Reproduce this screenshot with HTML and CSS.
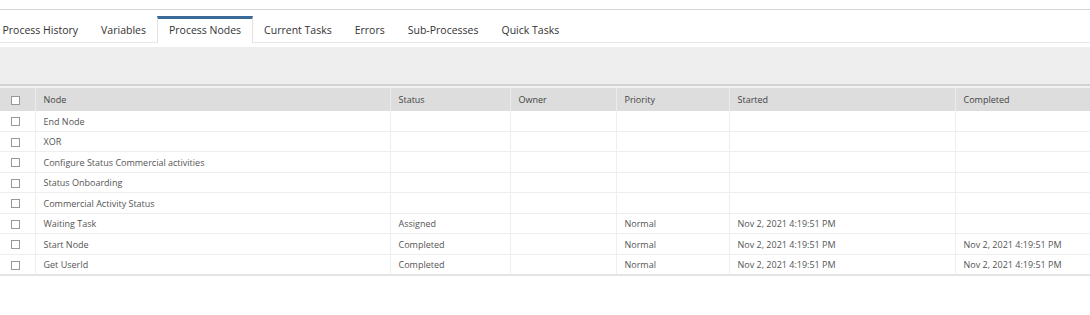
FILE: index.html
```html
<!DOCTYPE html>
<html lang="en">
<head>
    <meta charset="UTF-8">
    <title>Process Nodes</title>
    <link rel="stylesheet" href="styles.css">
</head>
<body>
    <div class="topbar"></div>

    <div class="tabs">
        <div class="tab">Process History</div>
        <div class="tab">Variables</div>
        <div class="tab active">Process Nodes</div>
        <div class="tab">Current Tasks</div>
        <div class="tab">Errors</div>
        <div class="tab">Sub-Processes</div>
        <div class="tab">Quick Tasks</div>
    </div>

    <div class="toolbar"></div>

    <table class="grid">
        <colgroup>
            <col class="c-check">
            <col class="c-node">
            <col class="c-status">
            <col class="c-owner">
            <col class="c-priority">
            <col class="c-started">
            <col>
        </colgroup>
        <thead>
            <tr>
                <th class="check"><span class="box"></span></th>
                <th>Node</th>
                <th>Status</th>
                <th>Owner</th>
                <th>Priority</th>
                <th>Started</th>
                <th>Completed</th>
            </tr>
        </thead>
        <tbody>
            <tr>
                <td class="check"><span class="box"></span></td>
                <td>End Node</td><td></td><td></td><td></td><td></td><td></td>
            </tr>
            <tr>
                <td class="check"><span class="box"></span></td>
                <td>XOR</td><td></td><td></td><td></td><td></td><td></td>
            </tr>
            <tr>
                <td class="check"><span class="box"></span></td>
                <td>Configure Status Commercial activities</td><td></td><td></td><td></td><td></td><td></td>
            </tr>
            <tr>
                <td class="check"><span class="box"></span></td>
                <td>Status Onboarding</td><td></td><td></td><td></td><td></td><td></td>
            </tr>
            <tr>
                <td class="check"><span class="box"></span></td>
                <td>Commercial Activity Status</td><td></td><td></td><td></td><td></td><td></td>
            </tr>
            <tr>
                <td class="check"><span class="box"></span></td>
                <td>Waiting Task</td>
                <td>Assigned</td>
                <td></td>
                <td>Normal</td>
                <td>Nov 2, 2021 4:19:51 PM</td>
                <td></td>
            </tr>
            <tr>
                <td class="check"><span class="box"></span></td>
                <td>Start Node</td>
                <td>Completed</td>
                <td></td>
                <td>Normal</td>
                <td>Nov 2, 2021 4:19:51 PM</td>
                <td>Nov 2, 2021 4:19:51 PM</td>
            </tr>
            <tr>
                <td class="check"><span class="box"></span></td>
                <td>Get UserId</td>
                <td>Completed</td>
                <td></td>
                <td>Normal</td>
                <td>Nov 2, 2021 4:19:51 PM</td>
                <td>Nov 2, 2021 4:19:51 PM</td>
            </tr>
        </tbody>
    </table>
</body>
</html>
```

FILE: styles.css
```css
body {
    margin: 0;
    font-family: 'Open Sans', 'Liberation Sans', sans-serif;
    background-color: #ffffff;
    color: #333333;
    overflow: hidden;
}
.topbar {
    height: 9px;
    border-bottom: 1px solid #d6d6d6;
}
.tabs {
    display: flex;
    margin-top: 6px;
    margin-left: -9px;
    height: 26px;
    border-bottom: 1px solid #e8e8e8;
}
.tab {
    padding: 2px 10.5px 0;
    font-size: 10.5px;
    line-height: 24px;
    color: #333333;
    border-left: 1px solid transparent;
    border-right: 1px solid transparent;
}
.tab.active {
    padding-top: 0;
    border-top: 3px solid #3a6a98;
    border-left-color: #e2e2e2;
    border-right-color: #e2e2e2;
    line-height: 23px;
    height: 24px;
    background-color: #ffffff;
}
.toolbar {
    margin-top: 4px;
    height: 37px;
    background-color: #eeeeee;
    border-bottom: 2px solid #d2d2d2;
}
.grid {
    width: 100%;
    border-collapse: collapse;
    table-layout: fixed;
    font-size: 9px;
    color: #555555;
    border-bottom: 2px solid #e4e4e4;
}
.c-check { width: 35px; }
.c-node { width: 355px; }
.c-status { width: 120px; }
.c-owner { width: 106px; }
.c-priority { width: 113px; }
.c-started { width: 226px; }
.grid th {
    background-color: #dddddd;
    font-weight: normal;
    text-align: left;
    color: #444444;
    height: 23px;
    padding: 0 8px;
    border-left: 1px solid #ebebeb;
    border-top: 2px solid #f2f2f2;
}
.grid td {
    height: 18.5px;
    padding: 1px 8px 0;
    border-left: 1px solid #eeeeee;
    border-bottom: 1px solid #eeeeee;
    white-space: nowrap;
}
.grid th:first-child,
.grid td:first-child {
    border-left: none;
}
.grid .check {
    padding: 0 0 0 11px;
    text-align: left;
}
.box {
    display: inline-block;
    width: 7px;
    height: 7px;
    border: 1px solid #999999;
    background-color: #ffffff;
    vertical-align: middle;
}
```
